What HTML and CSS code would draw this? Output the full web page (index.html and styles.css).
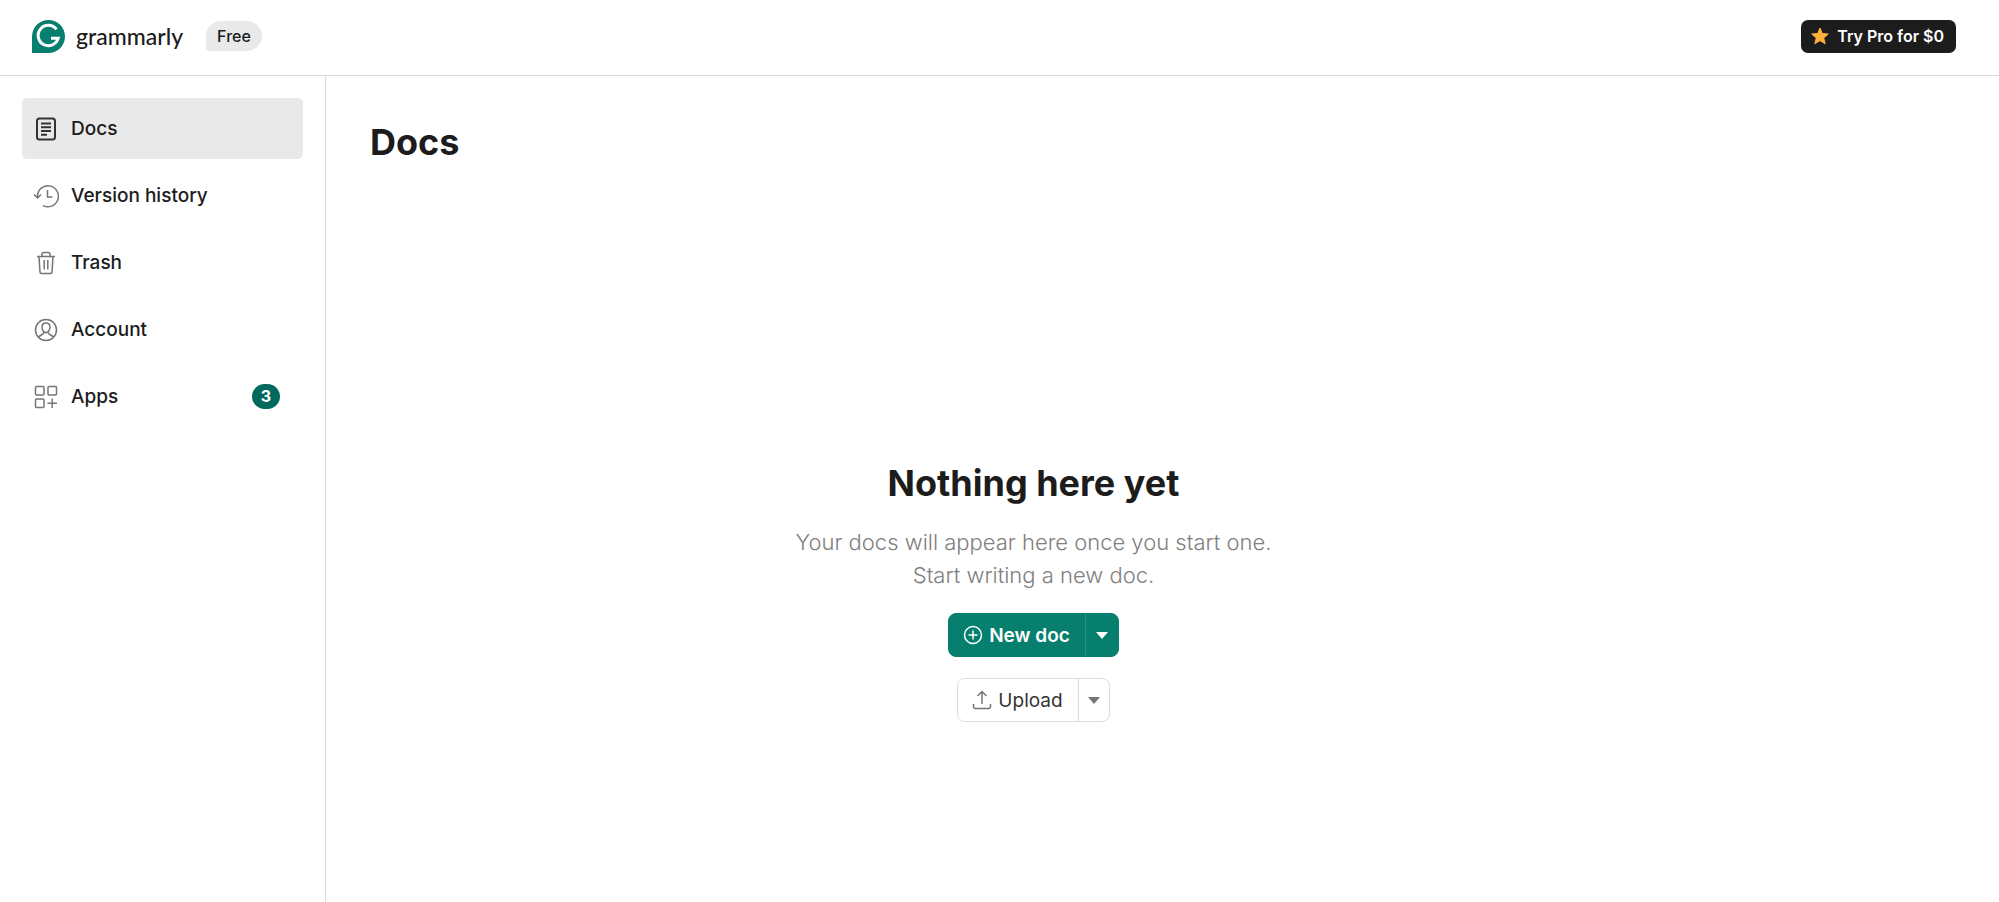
FILE: index.html
```
<!DOCTYPE html>
<html lang="en">
<head>
    <meta charset="UTF-8">
    <meta name="viewport" content="width=device-width, initial-scale=1">
    <title>Docs - Grammarly</title>
    <link rel="stylesheet" href="styles.css">
</head>
<body>
<header class="header">
    <a class="logo" href="#">
        <svg width="33" height="33" viewBox="0 0 33 33" aria-hidden="true">
            <path fill="#067f6f" d="M16.500 0A16.500 16.500 0 1 1 16.500 33H0V16.500A16.500 16.500 0 0 1 16.500 0Z"/>
            <path fill="none" stroke="#fff" stroke-width="3" d="M24.500 9.300A10.200 10.200 0 1 0 26.200 18.200H19"/>
        </svg>
        <span>grammarly</span>
    </a>
    <span class="plan">Free</span>
    <button class="pro" type="button">
        <svg width="18" height="18" viewBox="0 0 18 18" aria-hidden="true">
            <path fill="#ffb13d" stroke="#ffb13d" stroke-linejoin="round" d="M9 1l2.300 5.500 6 .5-4.600 3.900 1.500 5.800L9 13.600l-5.200 3.100 1.500-5.800L.7 7l6-.5z"/>
        </svg>
        Try Pro for $0
    </button>
</header>
<div class="page">
    <nav class="sidebar">
        <ul>
            <li>
                <a class="active" href="#">
                    <svg width="26" height="26" viewBox="0 0 26 26" aria-hidden="true">
                        <rect x="4" y="2.500" width="18" height="21" rx="2.500"/>
                        <path d="M8 7.500h10M8 11.200h10M8 15h10M8 18.800h6"/>
                    </svg>
                    Docs
                </a>
            </li>
            <li>
                <a href="#">
                    <svg width="26" height="26" viewBox="0 0 26 26" aria-hidden="true">
                        <path d="M4.500 14.500V12A10.500 10.500 0 1 1 10 22.600M1 11.500l3.500 3.500 3.500-3.500M14.500 7v7h5"/>
                    </svg>
                    Version history
                </a>
            </li>
            <li>
                <a href="#">
                    <svg width="26" height="26" viewBox="0 0 26 26" aria-hidden="true">
                        <path d="M4 6.500h18M9 6.500V4.500a2 2 0 0 1 2-2h4a2 2 0 0 1 2 2v2M6 6.500l1 15.500a1.500 1.500 0 0 0 1.500 1.500h9A1.500 1.500 0 0 0 19 22l1-15.500M11.200 10v9.500M14.800 10v9.500"/>
                    </svg>
                    Trash
                </a>
            </li>
            <li>
                <a href="#">
                    <svg width="26" height="26" viewBox="0 0 26 26" aria-hidden="true">
                        <circle cx="13" cy="13" r="10.500"/>
                        <path d="M13 6c2.600 0 4 1.800 4 4.300 0 2.800-1.800 5.200-4 5.200s-4-2.400-4-5.200C9 7.800 10.400 6 13 6ZM11 15c0 2.400-2 2.300-5.500 4.800M15 15c0 2.400 2 2.300 5.500 4.800"/>
                    </svg>
                    Account
                </a>
            </li>
            <li>
                <a href="#">
                    <svg width="26" height="26" viewBox="0 0 26 26" aria-hidden="true">
                        <rect x="2.500" y="2.500" width="8.500" height="8.500" rx="1"/>
                        <rect x="15" y="2.500" width="8.500" height="8.500" rx="1"/>
                        <rect x="2.500" y="15" width="8.500" height="8.500" rx="1"/>
                        <path d="M19.200 14.500v9.500M14.500 19.200h9.500"/>
                    </svg>
                    Apps
                    <span class="badge">3</span>
                </a>
            </li>
        </ul>
    </nav>
    <main class="main">
        <h1>Docs</h1>
        <section class="empty">
            <h2>Nothing here yet</h2>
            <p>Your docs will appear here once you start one.<br>Start writing a new doc.</p>
            <div class="split new">
                <button type="button">
                    <svg width="20" height="20" viewBox="0 0 20 20" aria-hidden="true">
                        <circle cx="10" cy="10" r="8.500"/>
                        <path d="M10 5.500v9M5.500 10h9"/>
                    </svg>
                    New doc
                </button>
                <button class="arrow" type="button" aria-label="More new doc options"></button>
            </div>
            <div class="split upload">
                <button type="button">
                    <svg width="20" height="20" viewBox="0 0 20 20" aria-hidden="true">
                        <path d="M10 14V1.500M5.500 6L10 1.500 14.500 6M1.500 14v2.500a2 2 0 0 0 2 2h13a2 2 0 0 0 2-2V14"/>
                    </svg>
                    Upload
                </button>
                <button class="arrow" type="button" aria-label="More upload options"></button>
            </div>
        </section>
    </main>
</div>
</body>
</html>
```
FILE: styles.css
```
*{
    box-sizing: border-box;
}
html,body,ul,h1,h2,p{
    margin: 0;
    padding: 0;
}
body{
    min-height: 100vh;
    display: flex;
    flex-direction: column;
    background-color: #fff;
    color: #1c1c1c;
    font-family: Inter, "Liberation Sans", sans-serif;
    font-size: 19px;
}
a{
    color: inherit;
    text-decoration: none;
}
button{
    border: 0;
    background: none;
    font-family: inherit;
    cursor: pointer;
}
svg{
    flex: none;
}
.header{
    display: flex;
    align-items: center;
    height: 76px;
    padding: 0 43px 3px 32px;
    border-bottom: 1px solid #dcdcdc;
}
.logo{
    display: flex;
    align-items: center;
    gap: 11px;
    font-family: Lato, sans-serif;
    font-size: 23px;
    font-weight: 500;
    line-height: 30px;
}
.plan{
    margin-left: 23px;
    padding: 0 11px;
    border-radius: 15px 15px 15px 3px;
    background-color: #e9e9e9;
    font-size: 16px;
    font-weight: 500;
    line-height: 30px;
}
.pro{
    display: flex;
    align-items: center;
    gap: 8px;
    height: 33px;
    margin-left: auto;
    padding: 0 12px 0 10px;
    border-radius: 7px;
    background-color: #1c1c1c;
    color: #fff;
    font-size: 16px;
    font-weight: 600;
}
.page{
    flex: 1;
    display: flex;
}
.sidebar{
    width: 326px;
    padding: 22px;
    border-right: 1px solid #dcdcdc;
}
.sidebar ul{
    display: flex;
    flex-direction: column;
    gap: 6px;
}
.sidebar li{
    list-style: none;
}
.sidebar a{
    display: flex;
    align-items: center;
    gap: 12px;
    height: 61px;
    padding: 0 23px 0 11px;
    border-radius: 5px;
    font-weight: 500;
}
.sidebar a.active{
    background-color: #e9e9e9;
}
.sidebar svg{
    fill: none;
    stroke: #757575;
    stroke-width: 1.5;
}
.sidebar .active svg{
    stroke: #333;
    stroke-width: 2;
}
.badge{
    width: 28px;
    margin-left: auto;
    border-radius: 13px;
    background-color: #026a5c;
    color: #fff;
    font-size: 16px;
    font-weight: 700;
    line-height: 25px;
    text-align: center;
}
.main{
    flex: 1;
    max-width: 1415px;
    padding: 44px;
}
h1,h2{
    font-size: 36px;
    font-weight: 700;
    line-height: 44px;
}
.empty{
    display: flex;
    flex-direction: column;
    align-items: center;
    padding-top: 297px;
    text-align: center;
}
.empty p{
    margin: 21px 0;
    color: #808080;
    font-size: 22px;
    font-weight: 300;
    line-height: 33px;
}
.split{
    display: flex;
    height: 44px;
    border: 1px solid #dcdcdc;
    border-radius: 8px;
}
.split button{
    display: flex;
    align-items: center;
    gap: 6px;
    padding: 0 15px 0 14px;
    color: #333;
    font-size: 19px;
}
.split svg{
    fill: none;
    stroke: #757575;
    stroke-width: 1.5;
}
.split .arrow{
    padding: 0 9px;
    border-left: 1px solid #dcdcdc;
}
.arrow::before{
    content: "";
    border: 6px solid transparent;
    border-top: 7px solid #757575;
    border-bottom: 0;
}
.new{
    margin-bottom: 21px;
    border-color: #067f6f;
    background-color: #067f6f;
}
.new button{
    color: #fff;
    font-weight: 600;
}
.new svg{
    stroke: #fff;
}
.new .arrow{
    padding: 0 10px;
    border-color: #2b9384;
}
.new .arrow::before{
    border-top-color: #fff;
}
```
